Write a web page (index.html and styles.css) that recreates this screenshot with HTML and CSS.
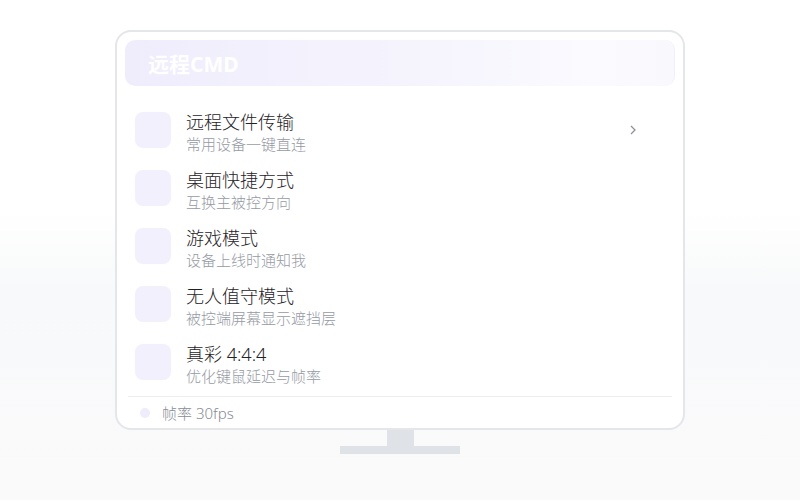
FILE: index.html
```html
<!DOCTYPE html>
<html lang="zh-CN">

<head>
    <meta charset="UTF-8">
    <title>远程CMD</title>
    <link rel="stylesheet" href="styles.css">
</head>

<body>
    <div class="stage">
        <div class="monitor">
            <div class="head">远程CMD</div>
            <ul class="list">
                <li>
                    <span class="ico"></span>
                    <div class="txt">
                        <p class="tit">远程文件传输</p>
                        <p class="sub">常用设备一键直连</p>
                    </div>
                    <svg class="arrow" width="8" height="12" viewBox="0 0 8 12">
                        <polyline points="2,2 6,6 2,10" fill="none" stroke="#8d929b" stroke-width="1.3" />
                    </svg>
                </li>
                <li>
                    <span class="ico"></span>
                    <div class="txt">
                        <p class="tit">桌面快捷方式</p>
                        <p class="sub">互换主被控方向</p>
                    </div>
                </li>
                <li>
                    <span class="ico"></span>
                    <div class="txt">
                        <p class="tit">游戏模式</p>
                        <p class="sub">设备上线时通知我</p>
                    </div>
                </li>
                <li>
                    <span class="ico"></span>
                    <div class="txt">
                        <p class="tit">无人值守模式</p>
                        <p class="sub">被控端屏幕显示遮挡层</p>
                    </div>
                </li>
                <li>
                    <span class="ico"></span>
                    <div class="txt">
                        <p class="tit">真彩 4:4:4</p>
                        <p class="sub">优化键鼠延迟与帧率</p>
                    </div>
                </li>
            </ul>
            <div class="foot">
                <span class="dot"></span>
                <span class="fps">帧率 30fps</span>
            </div>
        </div>
        <div class="neck"></div>
        <div class="base"></div>
    </div>
</body>

</html>
```

FILE: styles.css
```css
* {
    padding: 0;
    margin: 0;
    list-style: none;
    box-sizing: border-box;
}

html,
body {
    height: 100%;
}

body {
    font-family: "Noto Sans", "Noto Sans CJK SC", sans-serif;
    background: linear-gradient(#fff 0%, #fff 42%, #f8f9fa 58%, #fafafb 100%);
}

.stage {
    display: flex;
    flex-direction: column;
    align-items: center;
    padding-top: 30px;
}

.monitor {
    width: 570px;
    height: 400px;
    border: 2px solid #e4e6ea;
    border-radius: 16px;
    background: #fff;
    padding: 8px 8px 0;
    display: flex;
    flex-direction: column;
}

.head {
    height: 46px;
    border-radius: 10px;
    background: linear-gradient(90deg, #efedfc 0%, #f4f3fd 45%, #fafaff 85%, #f8f8fd 100%);
    border-right: 1px solid #f0f0f6;
    padding-left: 23px;
    display: flex;
    align-items: center;
    font-size: 21px;
    font-weight: bold;
    color: #fff;
}

.list {
    padding: 19px 0 0 10px;
    flex: 1;
}

.list li {
    height: 58px;
    display: flex;
    align-items: flex-start;
    padding-top: 6px;
}

.ico {
    width: 36px;
    height: 36px;
    margin-top: 1px;
    border-radius: 8px;
    background: #f2f0fd;
    flex-shrink: 0;
}

.txt {
    margin-left: 15px;
    flex: 1;
}

.tit {
    font-size: 18px;
    line-height: 22px;
    font-weight: 300;
    color: #1f2328;
}

.sub {
    font-size: 15px;
    line-height: 22px;
    font-weight: 300;
    color: #959aa3;
}

.arrow {
    margin: 13px 38px 0 0;
}

.foot {
    height: 32px;
    margin: 0 3px;
    border-top: 1px solid #eceef1;
    display: flex;
    align-items: center;
    gap: 12px;
    padding-left: 12px;
}

.fps {
    font-size: 15px;
    font-weight: 300;
    color: #878c95;
}

.dot {
    width: 10px;
    height: 10px;
    border-radius: 50%;
    background: #efecfb;
}

.neck {
    width: 27px;
    height: 16px;
    background: #dfe2e6;
}

.base {
    width: 120px;
    height: 8px;
    background: #dfe2e6;
}
```
